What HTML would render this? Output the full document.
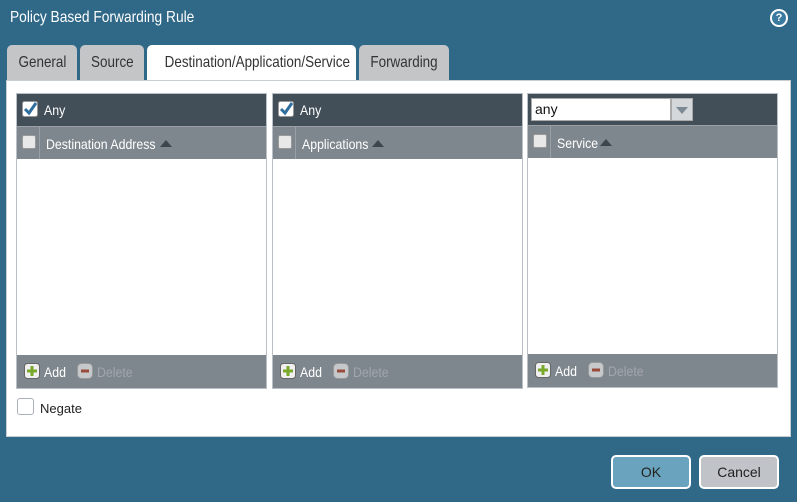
<!DOCTYPE html>
<html><head><style>
*{margin:0;padding:0;box-sizing:border-box}
body{width:797px;height:502px;background:#306888;font-family:"Liberation Sans",sans-serif;position:relative;overflow:hidden}
.a{position:absolute}
.title{left:10px;top:9px;color:#fff;font-size:16px;transform:scaleX(.86);transform-origin:left}
.tab{top:45px;height:36px;background:#c3c5c7;border-radius:5px 5px 0 0;color:#333;font-size:16px;text-align:center;line-height:36px;white-space:nowrap}
.tab span{display:inline-block;transform:scaleX(.84)}
.content{left:6px;top:80px;width:785px;height:357px;background:#fff;border:1px solid #c8cdd1}
.panel{top:93px;width:251px;height:296px;border:1px solid #b9bfc4;background:#fff}
.hd{left:0;top:0;right:0;height:32px;background:#434f58}
.ch{left:0;top:32px;right:0;height:33px;background:#7f878e;border-top:1px solid #9aa0a5}
.ft{left:0;bottom:0;right:0;height:33px;background:#7f878e}
.cb{width:14px;height:14px;background:#e8e8e8;border:1px solid #999;border-radius:2px}
.t{color:#fff;font-size:14px;transform:scaleX(.88);transform-origin:left;white-space:nowrap}
.tri{width:0;height:0;border-left:6px solid transparent;border-right:6px solid transparent;border-bottom:7px solid #3d464d}
.btn{top:455px;width:80px;height:34px;border:2px solid #fff;border-radius:5px;font-size:14px;text-align:center;line-height:30px;color:#222}
</style></head><body>
<div class="a title">Policy Based Forwarding Rule</div>
<div class="a" style="left:770px;top:9px;width:18px;height:18px;border-radius:50%;background:#fff;"></div>
<div class="a" style="left:772px;top:11px;width:14px;height:14px;border-radius:50%;background:#3a7aa0;color:#fff;font-size:11px;font-weight:bold;text-align:center;line-height:14px">?</div>
<div class="a tab" style="left:7px;width:70px"><span>General</span></div>
<div class="a tab" style="left:80px;width:64px"><span>Source</span></div>
<div class="a tab" style="left:147px;width:209px;background:#fff;height:37px"><span>Destination/Application/Service</span></div>
<div class="a tab" style="left:359px;width:90px"><span>Forwarding</span></div>
<div class="a content"></div>

<!-- panel 1 -->
<div class="a panel" style="left:16px">
 <div class="a hd"><svg class="a" style="left:5px;top:7px" width="16" height="16"><rect x="0.5" y="0.5" width="15" height="15" rx="2" fill="#fff" stroke="#999"/><path d="M3 8 L7 12 L14 2" stroke="#2f6fa0" stroke-width="3" fill="none"/></svg><div class="a t" style="left:27px;top:8px">Any</div></div>
 <div class="a ch"><div class="a cb" style="left:5px;top:8px"></div><div class="a" style="left:22px;top:0;width:1px;height:32px;background:#9aa0a5"></div><div class="a t" style="left:29px;top:9px">Destination Address</div><div class="a tri" style="left:143px;top:13px"></div></div>
 <div class="a ft"><svg class="a" style="left:7px;top:8px" width="16" height="16"><rect x="0.5" y="0.5" width="15" height="15" rx="3" fill="#f0f0f0" stroke="#666"/><path d="M8 3V13M3 8H13" stroke="#7aa82a" stroke-width="3"/></svg><div class="a t" style="left:27px;top:9px">Add</div><svg class="a" style="left:60px;top:8px" width="16" height="16"><rect x="0.5" y="0.5" width="15" height="15" rx="4" fill="#c6c9cc" stroke="#999"/><path d="M4 8H12" stroke="#9a4a3a" stroke-width="3"/></svg><div class="a t" style="left:80px;top:9px;color:#a0a6ab">Delete</div></div>
</div>
<!-- panel 2 -->
<div class="a panel" style="left:272px">
 <div class="a hd"><svg class="a" style="left:5px;top:7px" width="16" height="16"><rect x="0.5" y="0.5" width="15" height="15" rx="2" fill="#fff" stroke="#999"/><path d="M3 8 L7 12 L14 2" stroke="#2f6fa0" stroke-width="3" fill="none"/></svg><div class="a t" style="left:27px;top:8px">Any</div></div>
 <div class="a ch"><div class="a cb" style="left:5px;top:8px"></div><div class="a" style="left:22px;top:0;width:1px;height:32px;background:#9aa0a5"></div><div class="a t" style="left:29px;top:9px">Applications</div><div class="a tri" style="left:99px;top:13px"></div></div>
 <div class="a ft"><svg class="a" style="left:7px;top:8px" width="16" height="16"><rect x="0.5" y="0.5" width="15" height="15" rx="3" fill="#f0f0f0" stroke="#666"/><path d="M8 3V13M3 8H13" stroke="#7aa82a" stroke-width="3"/></svg><div class="a t" style="left:27px;top:9px">Add</div><svg class="a" style="left:60px;top:8px" width="16" height="16"><rect x="0.5" y="0.5" width="15" height="15" rx="4" fill="#c6c9cc" stroke="#999"/><path d="M4 8H12" stroke="#9a4a3a" stroke-width="3"/></svg><div class="a t" style="left:80px;top:9px;color:#a0a6ab">Delete</div></div>
</div>
<!-- panel 3 -->
<div class="a panel" style="left:527px;height:295px">
 <div class="a hd" style="height:31px"><div class="a" style="left:3px;top:4px;width:140px;height:23px;background:#fff;border:1px solid #aaa"></div><div class="a" style="left:143px;top:4px;width:22px;height:23px;background:#d5d8da;border:1px solid #aaa"></div><div class="a" style="left:148px;top:13px;border-left:6px solid transparent;border-right:6px solid transparent;border-top:7px solid #7c8a95"></div><div class="a" style="left:7px;top:7px;font-size:14px;color:#111">any</div></div>
 <div class="a ch" style="top:31px"><div class="a cb" style="left:5px;top:8px"></div><div class="a" style="left:22px;top:0;width:1px;height:32px;background:#9aa0a5"></div><div class="a t" style="left:29px;top:9px">Service</div><div class="a tri" style="left:72px;top:13px"></div></div>
 <div class="a ft"><svg class="a" style="left:7px;top:8px" width="16" height="16"><rect x="0.5" y="0.5" width="15" height="15" rx="3" fill="#f0f0f0" stroke="#666"/><path d="M8 3V13M3 8H13" stroke="#7aa82a" stroke-width="3"/></svg><div class="a t" style="left:27px;top:9px">Add</div><svg class="a" style="left:60px;top:8px" width="16" height="16"><rect x="0.5" y="0.5" width="15" height="15" rx="4" fill="#c6c9cc" stroke="#999"/><path d="M4 8H12" stroke="#9a4a3a" stroke-width="3"/></svg><div class="a t" style="left:80px;top:9px;color:#a0a6ab">Delete</div></div>
</div>

<div class="a" style="left:17px;top:398px;width:17px;height:17px;border:1px solid #aab0b5;border-radius:3px;background:#fff"></div>
<div class="a" style="left:40px;top:401px;font-size:13px;color:#222">Negate</div>

<div class="a btn" style="left:611px;background:#6aa3bd">OK</div>
<div class="a btn" style="left:699px;background:#c0c4c9">Cancel</div>
</body></html>
